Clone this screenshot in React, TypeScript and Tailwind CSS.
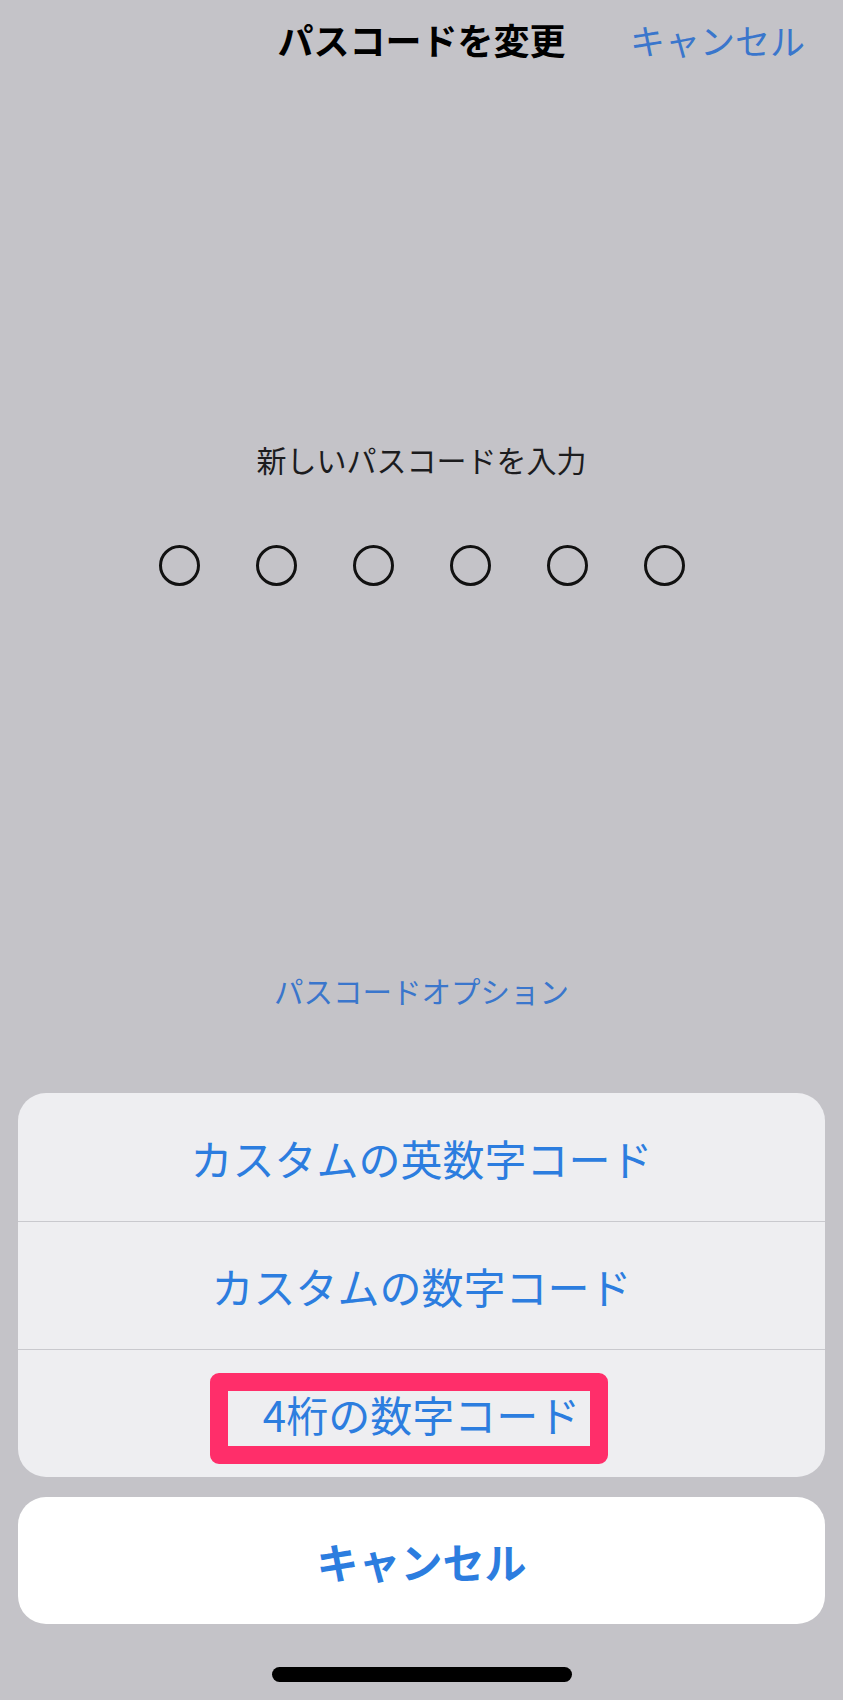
import React from 'react';

const font = { fontFamily: '"Noto Sans CJK JP", "Noto Sans", sans-serif' };

const options = ['カスタムの英数字コード', 'カスタムの数字コード', '4桁の数字コード'];

const App: React.FC = () => {
  return (
    <div className="w-[843px] h-[1700px] bg-[#c4c3c8] flex flex-col overflow-hidden" style={font}>
      {/* Nav bar */}
      <div className="grid grid-cols-[1fr_auto_1fr] items-center h-[78px]">
        <div />
        <div className="text-[36px] leading-none font-bold text-black">パスコードを変更</div>
        <div className="flex justify-end pr-[38px]">
          <span className="text-[35px] leading-none text-[#3a76cc]">キャンセル</span>
        </div>
      </div>

      {/* Prompt */}
      <div className="mt-[361px] h-[40px] flex items-center justify-center text-[30px] text-[#1c1c1e]">
        新しいパスコードを入力
      </div>

      {/* Passcode dots */}
      <div className="mt-[66px] flex justify-center gap-[56px]">
        {Array.from({ length: 6 }).map((_, i) => (
          <div key={i} className="w-[41px] h-[41px] rounded-full border-[3px] border-[#111]" />
        ))}
      </div>

      {/* Options link */}
      <div className="mt-[384px] h-[40px] flex items-center justify-center text-[29.5px] text-[#3a76cc]">
        パスコードオプション
      </div>

      {/* Action sheet */}
      <div className="mt-[83px] px-[18px] flex flex-col">
        <div className="bg-[#eeeef1] rounded-[28px] flex flex-col overflow-hidden">
          {options.map((label, i) => (
            <div
              key={label}
              className={`relative h-[128px] flex items-center justify-center text-[42px] text-[#2c7ddf] ${
                i > 0 ? 'border-t border-[#c9c9ce]' : ''
              }`}
            >
              {label}
              {i === 2 && (
                <div className="absolute left-[192px] top-[23px] w-[398px] h-[91px] border-[18px] border-[#ff2e6a] rounded-[9px]" />
              )}
            </div>
          ))}
        </div>

        <div className="mt-[20px] h-[127px] bg-white rounded-[28px] flex items-center justify-center text-[42px] font-bold text-[#2c7ddf]">
          キャンセル
        </div>
      </div>

      {/* Home indicator */}
      <div className="mt-[43px] flex justify-center">
        <div className="w-[300px] h-[15px] rounded-full bg-black" />
      </div>
    </div>
  );
};

export default App;
